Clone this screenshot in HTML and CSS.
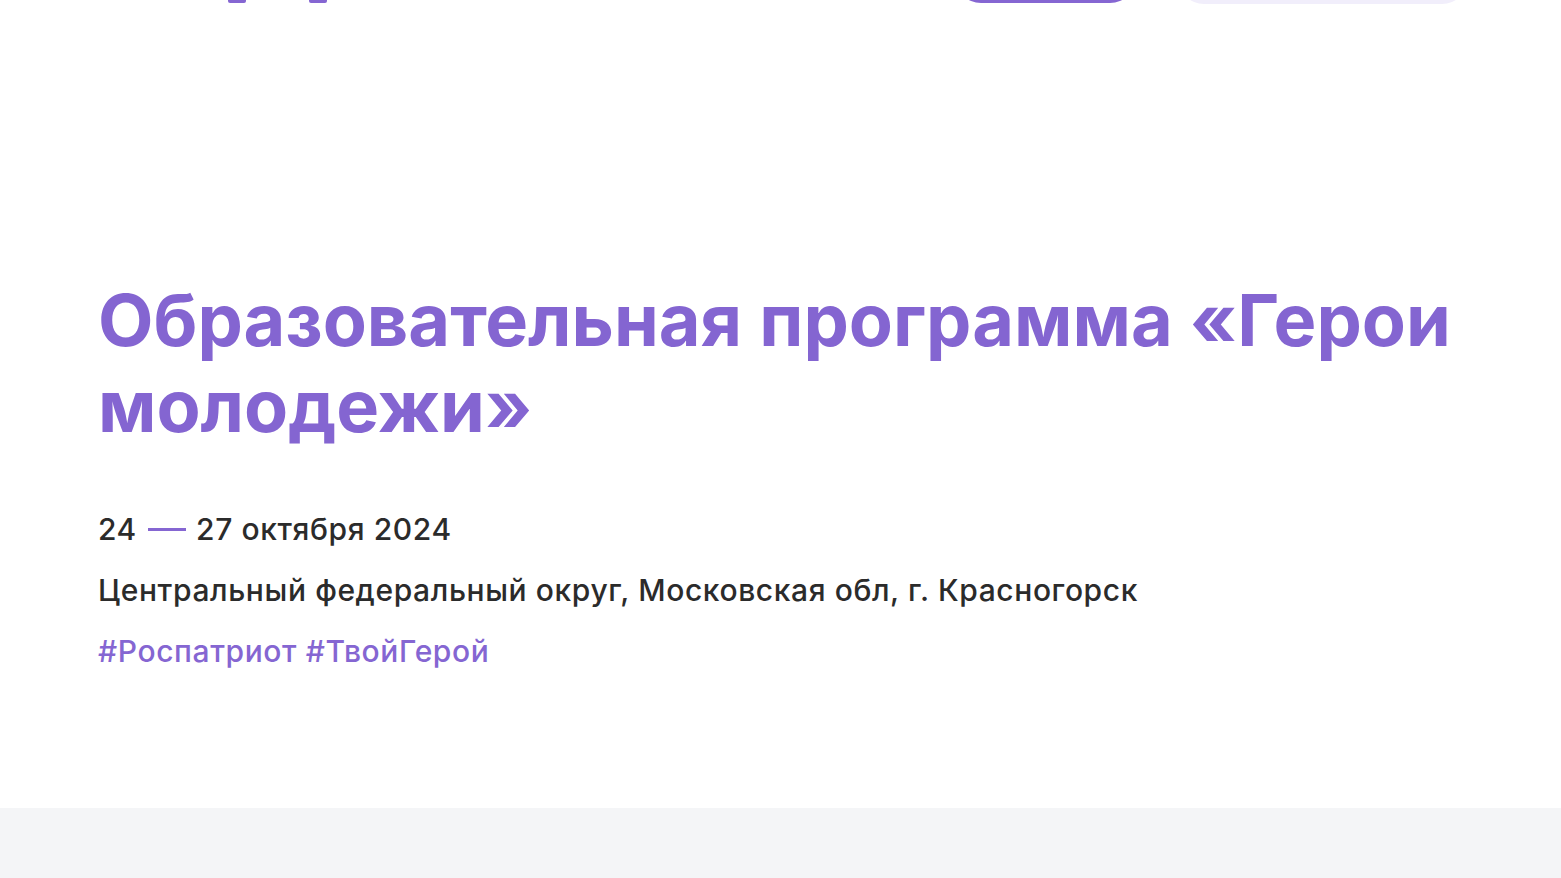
FILE: index.html
```html
<!DOCTYPE html>
<html lang="ru">
<head>
<meta charset="utf-8">
<title>Герои молодежи</title>
<link rel="stylesheet" href="styles.css">
</head>
<body>
<header class="header">
  <div class="header-inner">
    <div class="logo">
      <svg width="240" height="40" viewBox="0 0 240 40" aria-hidden="true">
        <rect x="130" y="0" width="18" height="40" rx="2" fill="#8566d2"/>
        <rect x="211" y="0" width="18" height="40" rx="2" fill="#8566d2"/>
      </svg>
    </div>
    <nav class="actions">
      <a class="btn btn-primary" href="#">Участвовать</a>
      <a class="btn btn-light" href="#">Личный кабинет</a>
    </nav>
  </div>
</header>
<main>
  <section class="hero">
    <h1 class="title">Образовательная программа «Герои молодежи»</h1>
    <div class="meta">
      <p class="meta-line">24 <span class="dash"></span> 27 октября 2024</p>
      <p class="meta-line">Центральный федеральный округ, Московская обл, г. Красногорск</p>
      <p class="meta-line tags">#Роспатриот #ТвойГерой</p>
    </div>
  </section>
  <section class="gray"></section>
</main>
</body>
</html>
```
FILE: styles.css
```css
html, body {
  margin: 0;
  padding: 0;
  background: #ffffff;
  font-family: Inter, "Noto Sans", sans-serif;
  color: #2b2b2b;
}

.header {
  height: 96px;
  margin-top: -92px;
}

.header-inner {
  height: 100%;
  padding: 0 93px 0 98px;
  display: flex;
  align-items: flex-end;
  justify-content: space-between;
}

.logo {
  display: flex;
  align-items: flex-end;
  height: 40px;
  margin-bottom: 1px;
}

.logo svg {
  display: block;
}

.actions {
  display: flex;
  gap: 42px;
  align-items: flex-end;
}

.btn {
  display: flex;
  align-items: center;
  justify-content: center;
  height: 52px;
  border-radius: 26px;
  font-size: 16px;
  font-weight: 600;
  text-decoration: none;
}

.btn-primary {
  width: 181px;
  background: #8566d2;
  color: #ffffff;
  margin-bottom: 1px;
}

.btn-light {
  width: 290px;
  background: #f1eefb;
  color: #8566d2;
}

.hero {
  padding: 273px 98px 136px;
}

.title {
  margin: 0;
  font-size: 72px;
  line-height: 1.2;
  font-weight: 700;
  color: #8465d1;
  letter-spacing: 0;
}

.meta {
  margin-top: 58px;
  display: flex;
  flex-direction: column;
  gap: 19px;
}

.meta-line {
  margin: 0;
  font-size: 30px;
  line-height: 42px;
  font-weight: 500;
  letter-spacing: 0.6px;
  color: #2b2b2b;
}

.dash {
  display: inline-block;
  width: 38px;
  height: 3px;
  background: #8566d2;
  vertical-align: middle;
  margin: 0 2px;
  position: relative;
  top: -2px;
}

.tags {
  color: #8566d2;
}

.gray {
  height: 70px;
  background: #f4f5f7;
}
```
